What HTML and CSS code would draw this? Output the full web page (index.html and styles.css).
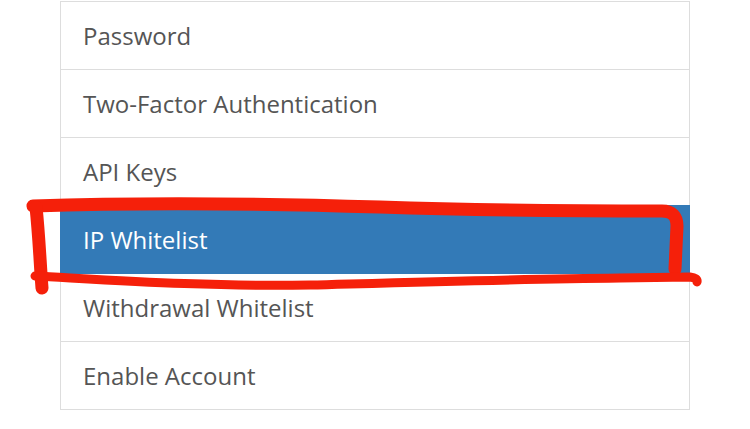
FILE: index.html
```html
<!DOCTYPE html>
<html>
  <head>
    <title>Security settings</title>
    <link rel="stylesheet" href="styles.css">
  </head>
  <body>
    <div class="list-group">
      <a class="list-group-item" href="#">Password</a>
      <a class="list-group-item" href="#">Two-Factor Authentication</a>
      <a class="list-group-item" href="#">API Keys</a>
      <a class="list-group-item active" href="#">IP Whitelist</a>
      <a class="list-group-item" href="#">Withdrawal Whitelist</a>
      <a class="list-group-item" href="#">Enable Account</a>
    </div>
    <svg class="markup" width="750" height="429" viewBox="0 0 750 429">
      <path d="M33,206 C120,203 250,203 380,207 C470,210 560,211 662,211 Q677,211 677,226 L675,269" stroke-width="13"/>
      <path d="M36,207 C39,235 40,262 42,288" stroke-width="13"/>
      <path d="M35,276 C110,280 210,287 310,285 C420,282 520,279 620,278 L690,277 Q698,278 697,282" stroke-width="9"/>
    </svg>
  </body>
</html>
```

FILE: styles.css
```css
body {
  margin: 0;
  background-color: #fff;
  font-family: "Open Sans", "Liberation Sans", sans-serif;
}

.list-group {
  display: flex;
  flex-direction: column;
  width: 630px;
  margin: 1px 0 0 60px;
}

.list-group-item {
  display: flex;
  align-items: center;
  box-sizing: border-box;
  height: 69px;
  margin-bottom: -1px;
  padding: 0 22px;
  border: 1px solid #ddd;
  background-color: #fff;
  color: #555;
  font-size: 24px;
  text-decoration: none;
}

.list-group-item:last-child {
  margin-bottom: 0;
}

.list-group-item.active {
  position: relative;
  background-color: #337ab7;
  border-color: #337ab7;
  color: #fff;
}

.markup {
  position: absolute;
  top: 0;
  left: 0;
  fill: none;
  stroke: #f5200a;
  stroke-linecap: round;
  stroke-linejoin: round;
}
```
